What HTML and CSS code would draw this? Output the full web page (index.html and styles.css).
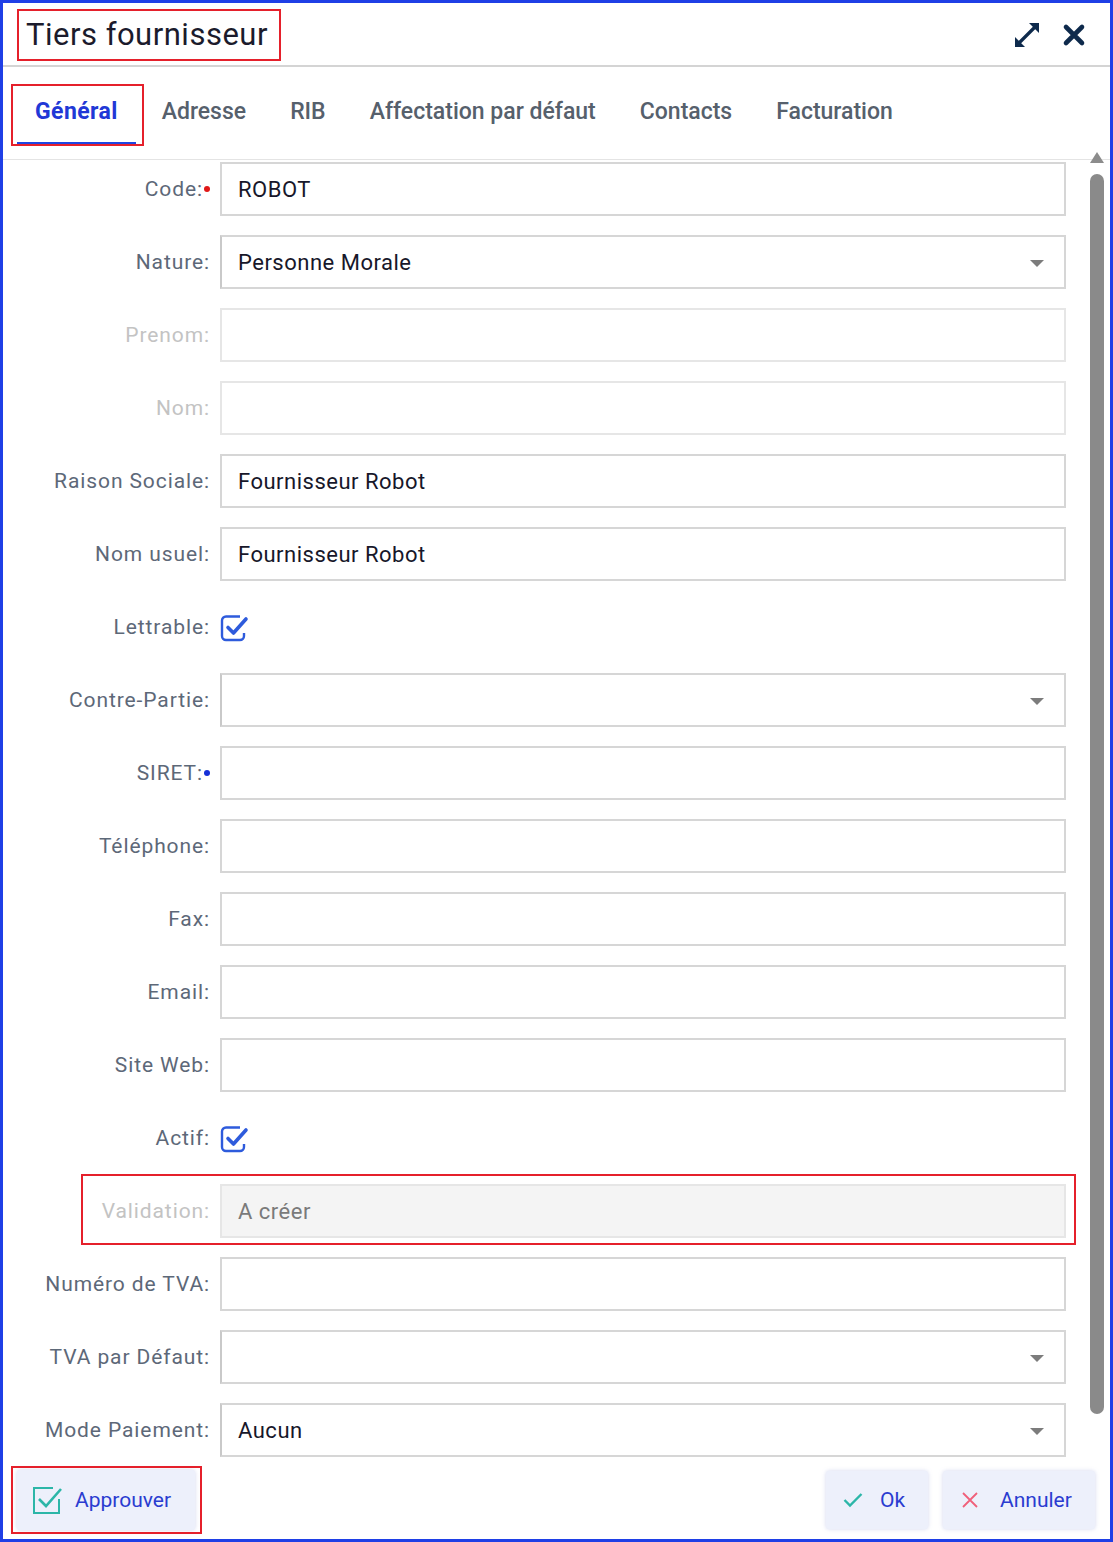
FILE: index.html
```html
<!DOCTYPE html>
<html lang="fr">
<head>
    <meta charset="UTF-8">
    <meta name="viewport" content="width=device-width, initial-scale=1.0">
    <title>Tiers fournisseur</title>
    <link rel="stylesheet" href="styles.css">
</head>
<body>
<div class="dialog">
    <div class="dialog_head">
        <h1 class="dialog_title marked">Tiers fournisseur</h1>
        <div class="head_tools">
            <!-- agrandir -->
            <svg class="tool" width="30" height="30" viewBox="0 0 30 30">
                <path d="M6 24 L24 6" stroke="#0e2a4c" stroke-width="3.2" stroke-linecap="round"/>
                <path d="M3 27 L3 17 L13 27 Z" fill="#0e2a4c"/>
                <path d="M27 3 L17 3 L27 13 Z" fill="#0e2a4c"/>
            </svg>
            <!-- fermer -->
            <svg class="tool" width="24" height="24" viewBox="0 0 24 24">
                <path d="M4 4 L20 20 M20 4 L4 20" stroke="#0e2a4c" stroke-width="4.6" stroke-linecap="round"/>
            </svg>
        </div>
    </div>

    <div class="tabs">
        <a href="#" class="tab active marked">Général</a>
        <a href="#" class="tab">Adresse</a>
        <a href="#" class="tab">RIB</a>
        <a href="#" class="tab">Affectation par défaut</a>
        <a href="#" class="tab">Contacts</a>
        <a href="#" class="tab">Facturation</a>
    </div>

    <div class="dialog_body">
        <div class="fields">
            <div class="row">
                <label class="lbl">Code:<span class="req red"></span></label>
                <div class="field">ROBOT</div>
            </div>
            <div class="row">
                <label class="lbl">Nature:</label>
                <div class="field select">Personne Morale<span class="caret"></span></div>
            </div>
            <div class="row off">
                <label class="lbl">Prenom:</label>
                <div class="field"></div>
            </div>
            <div class="row off">
                <label class="lbl">Nom:</label>
                <div class="field"></div>
            </div>
            <div class="row">
                <label class="lbl">Raison Sociale:</label>
                <div class="field">Fournisseur Robot</div>
            </div>
            <div class="row">
                <label class="lbl">Nom usuel:</label>
                <div class="field">Fournisseur Robot</div>
            </div>
            <div class="row">
                <label class="lbl">Lettrable:</label>
                <div class="check_cell">
                    <svg width="30" height="30" viewBox="0 0 30 30">
                        <path d="M20 3.5 H6 a4 4 0 0 0 -4 4 V23 a4 4 0 0 0 4 4 H20 a4 4 0 0 0 4 -4 V20" fill="none" stroke="#2e5bdc" stroke-width="2.4"/>
                        <path d="M8 14.5 L13.5 20 L26 6" fill="none" stroke="#2e5bdc" stroke-width="3.6" stroke-linecap="round" stroke-linejoin="round"/>
                    </svg>
                </div>
            </div>
            <div class="row">
                <label class="lbl">Contre-Partie:</label>
                <div class="field select"><span class="caret"></span></div>
            </div>
            <div class="row">
                <label class="lbl">SIRET:<span class="req blue"></span></label>
                <div class="field"></div>
            </div>
            <div class="row">
                <label class="lbl">Téléphone:</label>
                <div class="field"></div>
            </div>
            <div class="row">
                <label class="lbl">Fax:</label>
                <div class="field"></div>
            </div>
            <div class="row">
                <label class="lbl">Email:</label>
                <div class="field"></div>
            </div>
            <div class="row">
                <label class="lbl">Site Web:</label>
                <div class="field"></div>
            </div>
            <div class="row">
                <label class="lbl">Actif:</label>
                <div class="check_cell">
                    <svg width="30" height="30" viewBox="0 0 30 30">
                        <path d="M20 3.5 H6 a4 4 0 0 0 -4 4 V23 a4 4 0 0 0 4 4 H20 a4 4 0 0 0 4 -4 V20" fill="none" stroke="#2e5bdc" stroke-width="2.4"/>
                        <path d="M8 14.5 L13.5 20 L26 6" fill="none" stroke="#2e5bdc" stroke-width="3.6" stroke-linecap="round" stroke-linejoin="round"/>
                    </svg>
                </div>
            </div>
            <div class="row off validation marked">
                <label class="lbl">Validation:</label>
                <div class="field readonly">A créer</div>
            </div>
            <div class="row">
                <label class="lbl">Numéro de TVA:</label>
                <div class="field"></div>
            </div>
            <div class="row">
                <label class="lbl">TVA par Défaut:</label>
                <div class="field select"><span class="caret"></span></div>
            </div>
            <div class="row">
                <label class="lbl">Mode Paiement:</label>
                <div class="field select">Aucun<span class="caret"></span></div>
            </div>
        </div>
        <div class="scrollbar">
            <span class="scroll_up"></span>
            <span class="scroll_thumb"></span>
        </div>
    </div>

    <div class="dialog_foot">
        <button class="btn approve marked">
            <svg width="32" height="32" viewBox="0 0 32 32">
                <path d="M22 4 H3 V29 H28 V15" fill="none" stroke="#2cb6a8" stroke-width="2"/>
                <path d="M8 15 L15 22 L30 5" fill="none" stroke="#2cb6a8" stroke-width="2.6"/>
            </svg>
            <span>Approuver</span>
        </button>
        <div class="foot_right">
            <button class="btn ok">
                <svg width="20" height="16" viewBox="0 0 20 16">
                    <path d="M1.5 8 L7 13.5 L18.5 2" fill="none" stroke="#2cb6a8" stroke-width="2.4"/>
                </svg>
                <span>Ok</span>
            </button>
            <button class="btn cancel">
                <svg width="18" height="18" viewBox="0 0 18 18">
                    <path d="M2 2 L16 16 M16 2 L2 16" stroke="#f0607a" stroke-width="1.8"/>
                </svg>
                <span>Annuler</span>
            </button>
        </div>
    </div>
</div>
</body>
</html>
```

FILE: styles.css
```css
html, body { margin: 0; height: 100%; }
body { font-family: Roboto, "Liberation Sans", Arial, sans-serif; background: #fff; }

.dialog {
    box-sizing: border-box;
    height: 100vh;
    border: 3px solid #1f3fe6;
    display: flex;
    flex-direction: column;
    overflow: hidden;
}

/* annotation frames */
.marked { position: relative; }
.marked::after {
    content: '';
    position: absolute;
    border: 2px solid #e5202b;
    pointer-events: none;
}

.dialog_head {
    height: 62px;
    border-bottom: 2px solid #d4d4d4;
    display: flex;
    align-items: center;
    justify-content: space-between;
    padding: 0 24px 0 23px;
}
.dialog_title {
    margin: 0;
    font-size: 31px;
    font-weight: 400;
    color: #1b1b2c;
    letter-spacing: 0.5px;
}
.dialog_title::after { left: -9px; right: -13px; top: -7px; bottom: -8px; }
.head_tools { display: flex; align-items: center; gap: 20px; padding-top: 2px; }
.tool { display: block; }

.tabs {
    height: 93px;
    border-bottom: 1px solid #e4e4e4;
    display: flex;
    align-items: flex-start;
    gap: 8px;
    padding: 18px 0 0 14px;
    box-sizing: border-box;
}
.tab {
    font-size: 23px;
    font-weight: 500;
    color: #56606c;
    text-decoration: none;
    line-height: 26px;
    padding: 14px 18px 17px;
    border-bottom: 3px solid transparent;
    white-space: nowrap;
}
.tab.active { color: #2138d6; border-bottom-color: #1f45e0; font-weight: 700; letter-spacing: 0.4px; }
.tab.active::after { left: -6px; right: -8px; top: -1px; bottom: -4px; }

.dialog_body {
    flex: 1;
    min-height: 0;
    display: flex;
}
/* rows past the footer are clipped, the frame around a row may stick out sideways */
.fields { flex: 1; padding-top: 2px; overflow-x: visible; overflow-y: clip; }
.row {
    display: grid;
    grid-template-columns: 207px 846px;
    column-gap: 10px;
    height: 54px;
    margin-bottom: 19px;
    align-items: center;
}
.lbl {
    text-align: right;
    font-size: 21px;
    letter-spacing: 0.9px;
    color: #5d6878;
    white-space: nowrap;
}
.req {
    display: inline-block;
    vertical-align: middle;
    width: 6px;
    height: 6px;
    margin: 0 0 3px 1px;
    border-radius: 50%;
}
.req.red { background: #e01818; }
.req.blue { background: #1430d8; }
.row.off .lbl { color: #c3c3c3; }

.field {
    box-sizing: border-box;
    height: 54px;
    border: 2px solid #d6d6d6;
    padding: 0 16px;
    display: flex;
    align-items: center;
    font-size: 22px;
    letter-spacing: 0.5px;
    color: #17172a;
    background: #fff;
    position: relative;
}
.row.off .field { border-color: #e6e6e6; }
.field.select { border-left-color: #c9c9c9; }
.field.readonly { background: #f4f4f4; color: #7a7a7a; border-color: #ebebeb; }
.caret {
    position: absolute;
    right: 20px;
    top: 23px;
    border-left: 7px solid transparent;
    border-right: 7px solid transparent;
    border-top: 7px solid #7c7c7c;
}
.validation::after { left: 78px; right: -9px; top: -10px; bottom: -7px; }

.check_cell { display: flex; align-items: center; padding-top: 1px; }
.check_cell svg { display: block; }

.scrollbar {
    width: 14px;
    padding: 0 6px 0 23px;
    margin-top: -8px;
    display: flex;
    flex-direction: column;
    align-items: center;
}
.scroll_up {
    border-left: 7px solid transparent;
    border-right: 7px solid transparent;
    border-bottom: 11px solid #8c8c8c;
    margin-bottom: 11px;
}
.scroll_thumb {
    width: 14px;
    height: 1240px;
    flex-shrink: 0;
    background: #8a8a8a;
    border-radius: 7px;
}

.dialog_foot {
    height: 78px;
    flex-shrink: 0;
    display: flex;
    align-items: center;
    justify-content: space-between;
    padding: 0 15px 0 14px;
    background: #fff;
    position: relative;
}
.foot_right { display: flex; gap: 15px; }
.btn {
    font-family: inherit;
    font-size: 21px;
    color: #2a3cd0;
    background: #edf0fb;
    border: none;
    border-radius: 3px;
    box-shadow: 0 0 4px rgba(200, 205, 235, 0.8);
    height: 58px;
    display: flex;
    align-items: center;
    white-space: nowrap;
    cursor: pointer;
}
.btn svg { display: block; flex-shrink: 0; }
.approve { height: 60px; padding: 0 24px 0 14px; gap: 12px; }
.approve::after { left: -6px; right: -7px; top: -4px; bottom: -4px; }
.ok { width: 102px; padding: 0 0 0 17px; gap: 17px; }
.cancel { width: 152px; padding: 0 0 0 18px; gap: 21px; }
```
